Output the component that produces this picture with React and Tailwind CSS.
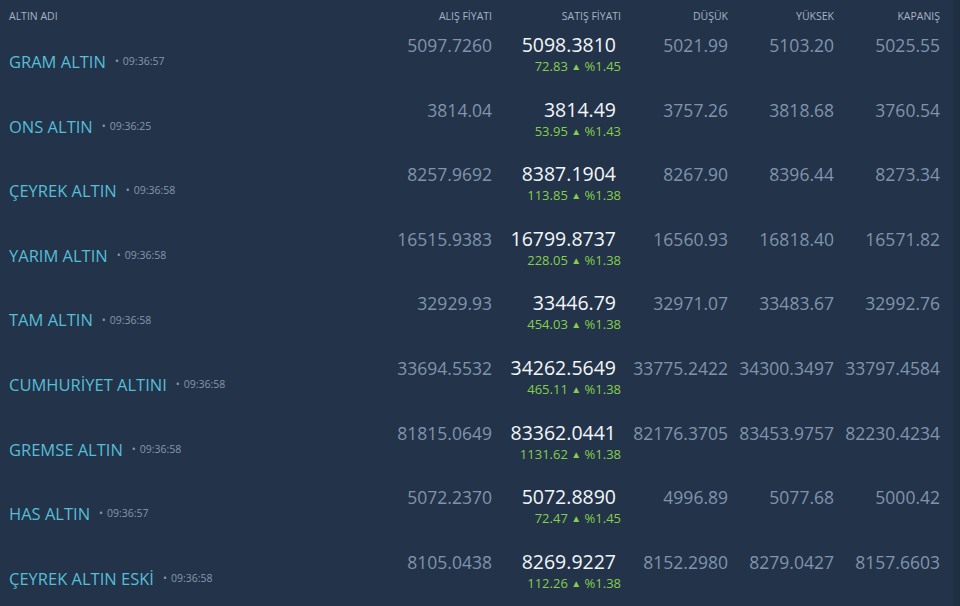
import React from "react";

const ROWS = [
  { name: "GRAM ALTIN", time: "09:36:57", buy: "5097.7260", sell: "5098.3810", diff: "72.83", pct: "%1.45", low: "5021.99", high: "5103.20", close: "5025.55" },
  { name: "ONS ALTIN", time: "09:36:25", buy: "3814.04", sell: "3814.49", diff: "53.95", pct: "%1.43", low: "3757.26", high: "3818.68", close: "3760.54" },
  { name: "ÇEYREK ALTIN", time: "09:36:58", buy: "8257.9692", sell: "8387.1904", diff: "113.85", pct: "%1.38", low: "8267.90", high: "8396.44", close: "8273.34" },
  { name: "YARIM ALTIN", time: "09:36:58", buy: "16515.9383", sell: "16799.8737", diff: "228.05", pct: "%1.38", low: "16560.93", high: "16818.40", close: "16571.82" },
  { name: "TAM ALTIN", time: "09:36:58", buy: "32929.93", sell: "33446.79", diff: "454.03", pct: "%1.38", low: "32971.07", high: "33483.67", close: "32992.76" },
  { name: "CUMHURİYET ALTINI", time: "09:36:58", buy: "33694.5532", sell: "34262.5649", diff: "465.11", pct: "%1.38", low: "33775.2422", high: "34300.3497", close: "33797.4584" },
  { name: "GREMSE ALTIN", time: "09:36:58", buy: "81815.0649", sell: "83362.0441", diff: "1131.62", pct: "%1.38", low: "82176.3705", high: "83453.9757", close: "82230.4234" },
  { name: "HAS ALTIN", time: "09:36:57", buy: "5072.2370", sell: "5072.8890", diff: "72.47", pct: "%1.45", low: "4996.89", high: "5077.68", close: "5000.42" },
  { name: "ÇEYREK ALTIN ESKİ", time: "09:36:58", buy: "8105.0438", sell: "8269.9227", diff: "112.26", pct: "%1.38", low: "8152.2980", high: "8279.0427", close: "8157.6603" },
];

const GRID = "grid grid-cols-[1fr_100px_129px_107px_106px_106px]";

export default function App() {
  return (
    <div
      className="w-[960px] h-[606px] overflow-hidden bg-[#22334a] border-r-[7px] border-[#1f2e42]"
      style={{ fontFamily: '"Open Sans", "Noto Sans", sans-serif' }}
    >
      <div className="pr-[13px]">
        {/* HEADER */}
        <div className={`${GRID} h-[30px] items-center pt-[4px] text-[10.5px] text-[#a7b4c5] uppercase`}>
          <div className="pl-[9px]">ALTIN ADI</div>
          <div className="text-right">ALIŞ FİYATI</div>
          <div className="text-right">SATIŞ FİYATI</div>
          <div className="text-right">DÜŞÜK</div>
          <div className="text-right">YÜKSEK</div>
          <div className="text-right">KAPANIŞ</div>
        </div>

        {/* ROWS */}
        {ROWS.map((r) => (
          <div key={r.name} className={`${GRID} h-[64.6px] pt-[3px]`}>
            <div className="self-start pl-[9px] pt-[18px] flex items-center whitespace-nowrap">
              <span className="text-[16.5px] leading-[22px] text-[#57bed5]">{r.name}</span>
              <span className="ml-[9px] text-[10.5px] text-[#8797ab]">
                <span className="mr-[4px]">•</span>{r.time}
              </span>
            </div>
            <div className="text-right text-[17.5px] leading-[24px] text-[#8193aa] whitespace-nowrap">{r.buy}</div>
            <div className="flex flex-col items-end">
              <div className="pr-[5px] text-[19.5px] leading-[24px] font-medium text-[#f3f6f9] whitespace-nowrap">{r.sell}</div>
              <div className="mt-[1px] text-[13px] leading-[17px] text-[#86cf4c] whitespace-nowrap">
                {r.diff} <span className="text-[10px] align-[1px]">▲</span> {r.pct}
              </div>
            </div>
            <div className="text-right text-[17.5px] leading-[24px] text-[#8193aa] whitespace-nowrap">{r.low}</div>
            <div className="text-right text-[17.5px] leading-[24px] text-[#8193aa] whitespace-nowrap">{r.high}</div>
            <div className="text-right text-[17.5px] leading-[24px] text-[#8193aa] whitespace-nowrap">{r.close}</div>
          </div>
        ))}
      </div>
    </div>
  );
}
